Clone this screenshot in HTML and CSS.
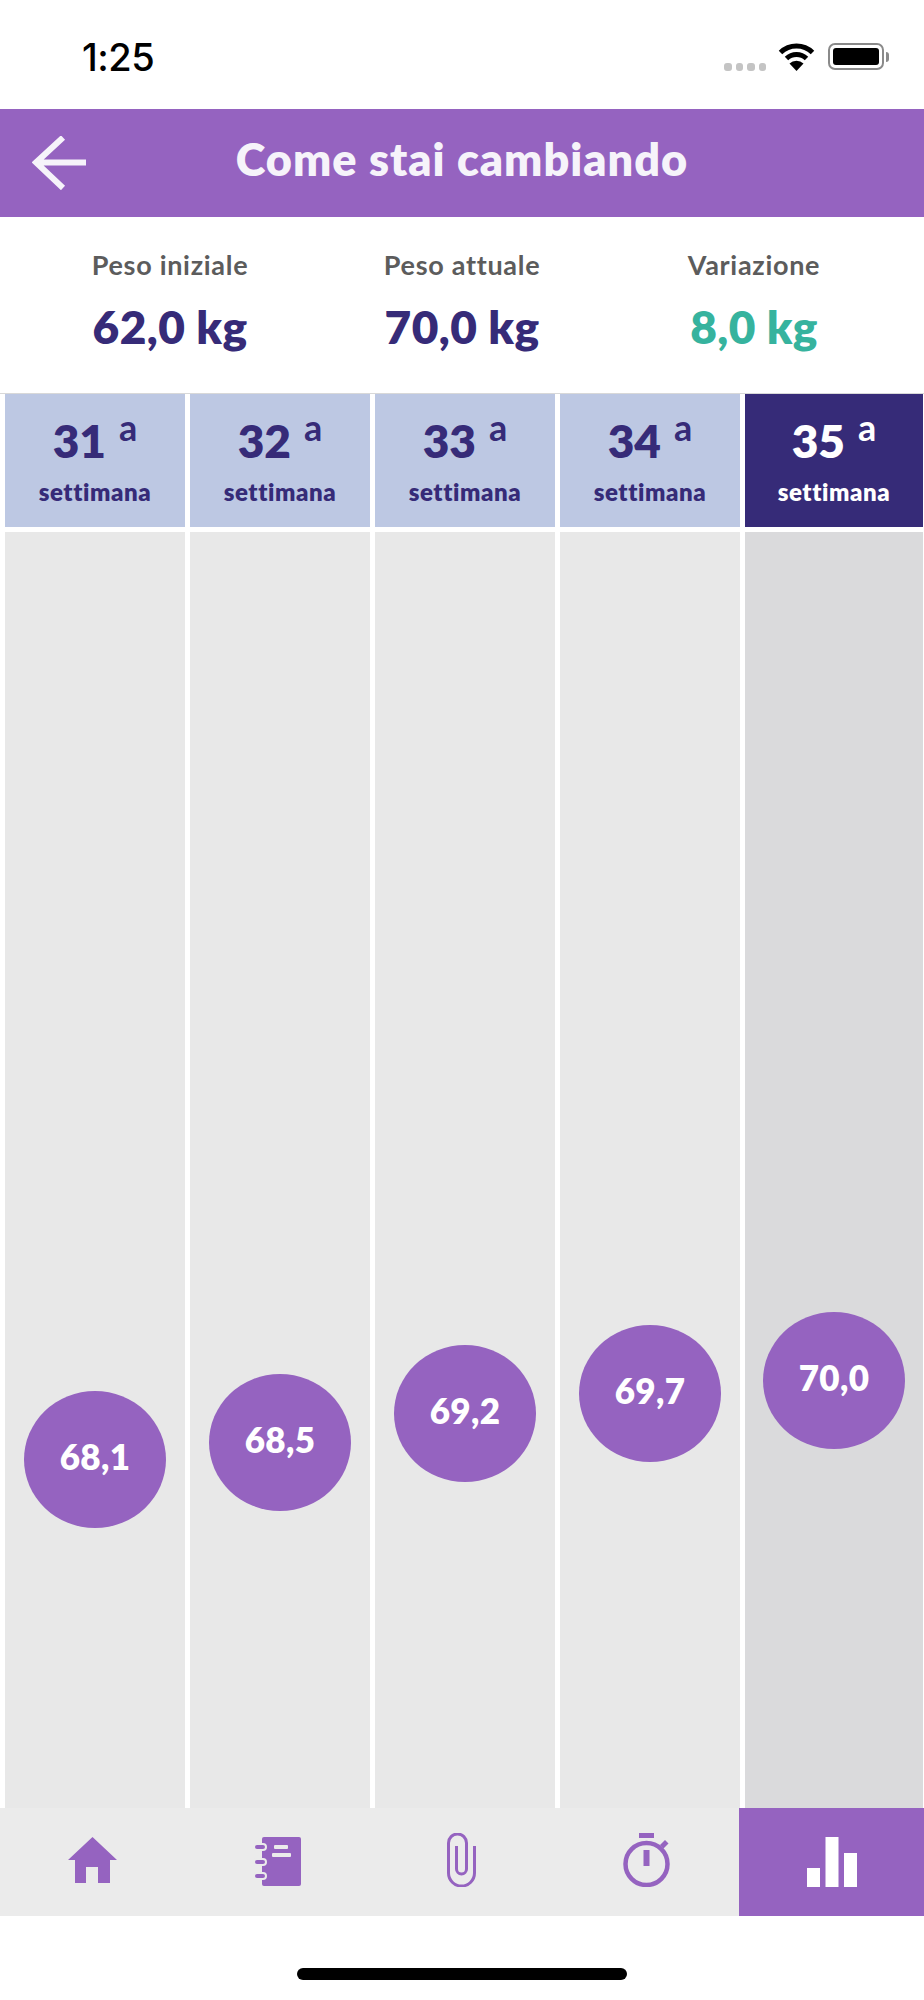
FILE: index.html
```html
<!DOCTYPE html>
<html lang="it">
<head>
    <meta charset="UTF-8">
    <meta name="viewport" content="width=device-width, initial-scale=1.0">
    <title>Come stai cambiando</title>
    <link rel="stylesheet" href="styles.css">
</head>
<body>
    <div class="status-bar">
        <span class="time">1:25</span>
        <div class="status-icons">
            <div class="signal"><i></i><i></i><i></i><i></i></div>
            <svg class="wifi" width="37" height="29" viewBox="0 0 37 29">
                <path d="M2.500 10.500a23 23 0 0 1 32 0" fill="none" stroke="#000" stroke-width="5"/>
                <path d="M8.500 16.500a14.500 14.500 0 0 1 20 0" fill="none" stroke="#000" stroke-width="5"/>
                <path d="M18.500 29l-7-7.500a10 10 0 0 1 14 0z" fill="#000"/>
            </svg>
            <div class="battery"><div class="battery-fill"></div></div>
            <div class="battery-cap"></div>
        </div>
    </div>

    <header class="top-bar">
        <svg class="back" width="54" height="54" viewBox="0 0 54 54">
            <path d="M31 1.500L4 26.500L31 52M4 26.500H54" fill="none" stroke="#f6f3fa" stroke-width="6"/>
        </svg>
        <h1>Come stai cambiando</h1>
    </header>

    <section class="summary">
        <div class="summary-item">
            <h2>Peso iniziale</h2>
            <p>62,0 kg</p>
        </div>
        <div class="summary-item">
            <h2>Peso attuale</h2>
            <p>70,0 kg</p>
        </div>
        <div class="summary-item variation">
            <h2>Variazione</h2>
            <p>8,0 kg</p>
        </div>
    </section>

    <section class="weeks">
        <div class="week-head">
            <div class="week-num">31<sup>a</sup></div>
            <div class="week-label">settimana</div>
        </div>
        <div class="week-head">
            <div class="week-num">32<sup>a</sup></div>
            <div class="week-label">settimana</div>
        </div>
        <div class="week-head">
            <div class="week-num">33<sup>a</sup></div>
            <div class="week-label">settimana</div>
        </div>
        <div class="week-head">
            <div class="week-num">34<sup>a</sup></div>
            <div class="week-label">settimana</div>
        </div>
        <div class="week-head current">
            <div class="week-num">35<sup>a</sup></div>
            <div class="week-label">settimana</div>
        </div>

        <div class="week-col"><div class="bubble" style="margin-top: 859px">68,1</div></div>
        <div class="week-col"><div class="bubble" style="margin-top: 842px">68,5</div></div>
        <div class="week-col"><div class="bubble" style="margin-top: 813px">69,2</div></div>
        <div class="week-col"><div class="bubble" style="margin-top: 793px">69,7</div></div>
        <div class="week-col current"><div class="bubble" style="margin-top: 780px">70,0</div></div>
    </section>

    <nav class="tab-bar">
        <div class="tab">
            <svg width="49" height="47" viewBox="0 0 49 47">
                <path d="M24.500 0L49 23H42V46H30V30H18V46H7V23H0Z" fill="#9563c0"/>
            </svg>
        </div>
        <div class="tab">
            <svg width="47" height="49" viewBox="0 0 47 49">
                <rect x="8" y="0" width="39" height="49" rx="2" fill="#9563c0"/>
                <rect x="0" y="7" width="12" height="6" rx="3" fill="#9563c0" stroke="#ebebeb" stroke-width="2"/>
                <rect x="0" y="22" width="12" height="6" rx="3" fill="#9563c0" stroke="#ebebeb" stroke-width="2"/>
                <rect x="0" y="36" width="12" height="6" rx="3" fill="#9563c0" stroke="#ebebeb" stroke-width="2"/>
                <rect x="20" y="8" width="14" height="4" rx="1" fill="#ebebeb"/>
                <rect x="18" y="16" width="19" height="4" rx="1" fill="#ebebeb"/>
            </svg>
        </div>
        <div class="tab tall">
            <svg width="29" height="54" viewBox="0 0 29 54">
                <path d="M27.500 13V40A13 13 0 0 1 1.500 40V10A9 9 0 0 1 19.500 10V36A5 5 0 0 1 9.500 36V13" fill="none" stroke="#9563c0" stroke-width="3"/>
            </svg>
        </div>
        <div class="tab tall">
            <svg width="47" height="54" viewBox="0 0 47 54">
                <circle cx="23.500" cy="31" r="21" fill="none" stroke="#9563c0" stroke-width="4.500"/>
                <rect x="16" y="0" width="15" height="5" fill="#9563c0"/>
                <rect x="20.500" y="17" width="6" height="16" fill="#9563c0"/>
                <path d="M37 12L42 7L45.500 10.500L40.500 15.500Z" fill="#9563c0"/>
            </svg>
        </div>
        <div class="tab active">
            <svg width="50" height="50" viewBox="0 0 50 50">
                <rect x="0" y="31" width="13" height="19" fill="#fff"/>
                <rect x="18.500" y="0" width="13" height="50" fill="#fff"/>
                <rect x="37" y="16" width="13" height="34" fill="#fff"/>
            </svg>
        </div>
    </nav>

    <div class="home-area"><div class="home-bar"></div></div>
</body>
</html>
```

FILE: styles.css
```css
body {
    font-family: Lato, "Open Sans", sans-serif;
    font-variant-ligatures: none;
    margin: 0;
    padding: 0;
    height: 2000px;
    display: flex;
    flex-direction: column;
    background: #fff;
    overflow: hidden;
}

.status-bar {
    height: 109px;
    display: flex;
    justify-content: space-between;
    padding: 43px 35px 0 82px;
    box-sizing: border-box;
}

.time {
    font-family: Inter, "Liberation Sans", sans-serif;
    font-size: 38px;
    font-weight: 500;
    line-height: 28px;
    letter-spacing: -0.5px;
    color: #000;
    height: 28px;
}

.status-icons {
    display: flex;
    align-items: flex-start;
}

.signal {
    display: flex;
    gap: 4px;
    margin: 20px 12px 0 0;
}

.signal i {
    width: 7.500px;
    height: 8px;
    border-radius: 3px;
    background: #c4c4c4;
}

.wifi {
    margin-right: 13px;
    margin-top: -1px;
}

.battery {
    width: 56px;
    height: 27px;
    border: 2px solid #8a8a8a;
    border-radius: 7px;
    box-sizing: border-box;
    padding: 3px;
}

.battery-fill {
    height: 100%;
    background: #000;
    border-radius: 3px;
}

.battery-cap {
    width: 3px;
    height: 10px;
    margin-top: 9px;
    margin-left: 2px;
    background: #8a8a8a;
    border-radius: 0 3px 3px 0;
}

.top-bar {
    height: 108px;
    background: #9563c0;
    display: grid;
    grid-template-columns: 1fr auto 1fr;
    align-items: center;
    padding-left: 32px;
}

.top-bar h1 {
    margin: -8px 0 0 -32px;
    font-size: 45px;
    font-weight: 800;
    letter-spacing: 1px;
    color: #f6f3fa;
    white-space: nowrap;
}

.summary {
    height: 177px;
    box-sizing: border-box;
    border-bottom: 1px solid #d8d8d8;
    display: grid;
    grid-template-columns: repeat(3, 1fr);
    padding: 32px 24px 0;
    text-align: center;
}

.summary-item h2 {
    margin: 0;
    font-size: 27px;
    line-height: 32px;
    font-weight: 700;
    letter-spacing: 0.7px;
    color: #5c5c5c;
}

.summary-item p {
    margin: 19px 0 0;
    font-size: 46px;
    line-height: 54px;
    font-weight: 800;
    letter-spacing: 0.4px;
    color: #362b78;
}

.variation p {
    color: #36b39e;
}

.weeks {
    flex: 1;
    display: grid;
    grid-template-columns: repeat(4, 180px) 178px;
    grid-template-rows: 133px 1fr;
    gap: 5px;
    padding: 0 1px 0 5px;
    min-height: 0;
}

.week-head {
    background: #bdc8e3;
    color: #362b78;
    text-align: center;
}

.week-head.current {
    background: #362b78;
    color: #fff;
}

.week-num {
    font-size: 46px;
    line-height: 54px;
    font-weight: 800;
    margin-top: 20px;
}

.week-num sup {
    font-size: 36px;
    font-weight: 700;
    line-height: 0;
    margin-left: 13px;
    vertical-align: 17px;
}

.week-label {
    font-size: 24px;
    line-height: 30px;
    font-weight: 800;
    letter-spacing: 0.6px;
    margin-top: 9px;
}

.week-col {
    background: #e8e8e8;
    overflow: hidden;
}

.week-col.current {
    background: #dadadc;
}

.bubble {
    width: 142px;
    height: 137px;
    margin-left: auto;
    margin-right: auto;
    border-radius: 50%;
    background: #9563c0;
    color: #fff;
    font-size: 35px;
    font-weight: 800;
    letter-spacing: 0.3px;
    display: flex;
    align-items: center;
    justify-content: center;
    padding-bottom: 7px;
    box-sizing: border-box;
}

.tab-bar {
    height: 108px;
    display: grid;
    grid-template-columns: repeat(5, 1fr);
    background: #ebebeb;
}

.tab {
    display: flex;
    justify-content: center;
    align-items: flex-start;
    padding-top: 29px;
    box-sizing: border-box;
}

.tab.tall {
    padding-top: 25px;
}

.tab.active {
    background: #9563c0;
}

.home-area {
    flex: none;
    height: 84px;
    padding-top: 52px;
    box-sizing: border-box;
}

.home-bar {
    width: 330px;
    height: 12px;
    margin: 0 auto;
    border-radius: 6px;
    background: #000;
}
```
